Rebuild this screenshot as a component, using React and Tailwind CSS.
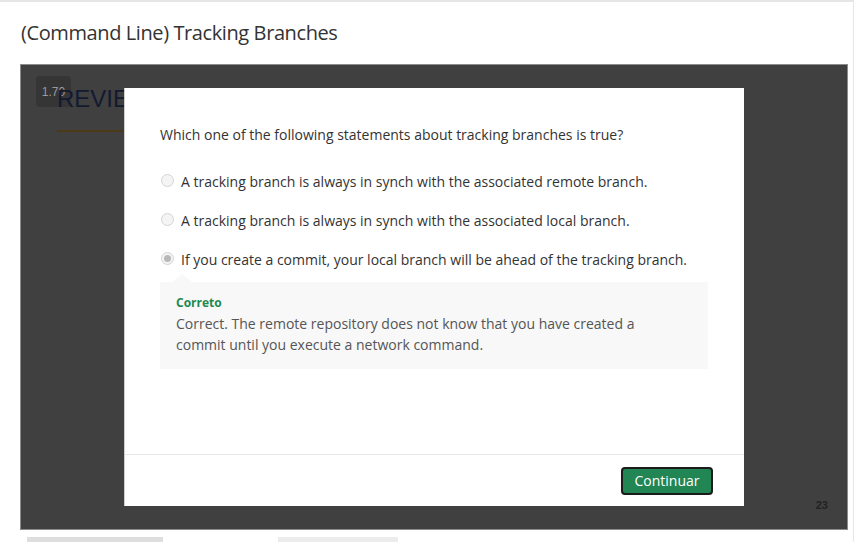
import React from 'react';

const options = [
  { text: 'A tracking branch is always in synch with the associated remote branch.', checked: false },
  { text: 'A tracking branch is always in synch with the associated local branch.', checked: false },
  { text: 'If you create a commit, your local branch will be ahead of the tracking branch.', checked: true },
];

function Radio({ checked }) {
  return (
    <span className="mt-[-4px] flex h-[13px] w-[13px] shrink-0 items-center justify-center rounded-full border border-[#d4d4d4] bg-[#f4f4f4]">
      {checked && <span className="h-[7px] w-[7px] rounded-full bg-[#b8b8b8]" />}
    </span>
  );
}

export default function App() {
  return (
    <div
      className="relative h-[542px] w-[854px] overflow-hidden border-t-2 border-r border-[#e6e6e6] bg-white"
      style={{ fontFamily: '"Open Sans", sans-serif' }}
    >
      <h1 className="px-[21px] pt-[16px] text-[20px] leading-[30px] tracking-[-0.4px] text-[#333]">
        (Command Line) Tracking Branches
      </h1>

      <div className="relative mx-[20px] mt-[16px] h-[466px] w-[828px] border border-[#8c8c8c] bg-[#404040]">
        {/* slide behind the overlay */}
        <div className="absolute left-[15px] top-[11px] flex h-[31px] w-[35px] items-center justify-center rounded-[4px] bg-[#353535] text-[12px] text-[#9a9a9a]" style={{ fontFamily: '"Liberation Sans", sans-serif' }}>
          1.70
        </div>
        <div className="relative pl-[36px] pt-[20px]">
          <div className="text-[24px] leading-[28px] text-[#131a30]" style={{ fontFamily: '"Liberation Sans", sans-serif' }}>
            REVIEW
          </div>
          <div className="mt-[17px] h-[2px] w-[90px] bg-[#4a3a18]" />
        </div>
        <div className="absolute bottom-[16px] right-[19px] text-[11px] font-bold text-[#222]" style={{ fontFamily: '"Liberation Sans", sans-serif' }}>
          23
        </div>

        {/* modal */}
        <div className="absolute left-[103px] top-[23px] flex h-[418px] w-[620px] flex-col border-l border-[#d0d0d0] bg-white">
          <div className="flex-1 pl-[35px] pr-[36px] pt-[36px]">
            <p className="text-[14px] leading-[22px] text-[#333]">
              Which one of the following statements about tracking branches is true?
            </p>
            <div className="mt-[25px] flex flex-col gap-[17px]">
              {options.map((o) => (
                <div key={o.text} className="flex items-center gap-[7px] pl-[1px]">
                  <Radio checked={o.checked} />
                  <span className="text-[14px] leading-[22px] text-[#333]">{o.text}</span>
                </div>
              ))}
            </div>
            <div className="relative mt-[11px] h-[87px] w-[548px] bg-[#f8f8f8] pl-[16px] pt-[12px]">
              <span className="absolute left-[12px] top-[-8px] h-0 w-0 border-x-[10px] border-b-[8px] border-x-transparent border-b-[#f8f8f8]" />
              <div className="text-[12px] font-bold leading-[18px] text-[#1e8a4f]">Correto</div>
              <p className="mt-[1px] w-[480px] text-[14px] leading-[21px] text-[#555]">
                Correct. The remote repository does not know that you have created a commit until you execute a network command.
              </p>
            </div>
          </div>
          <div className="flex h-[52px] items-center justify-end border-t border-[#e8e8e8] pr-[31px]">
            <button className="h-[28px] w-[92px] rounded-[4px] border-2 border-[#1b1b1b] bg-[#218554] text-[14px] leading-[20px] text-white">
              Continuar
            </button>
          </div>
        </div>
      </div>

      <div className="mt-[7px] flex">
        <div className="ml-[27px] h-[6px] w-[136px] bg-[#dedede]" />
        <div className="ml-[115px] h-[6px] w-[120px] bg-[#ececec]" />
      </div>
    </div>
  );
}
